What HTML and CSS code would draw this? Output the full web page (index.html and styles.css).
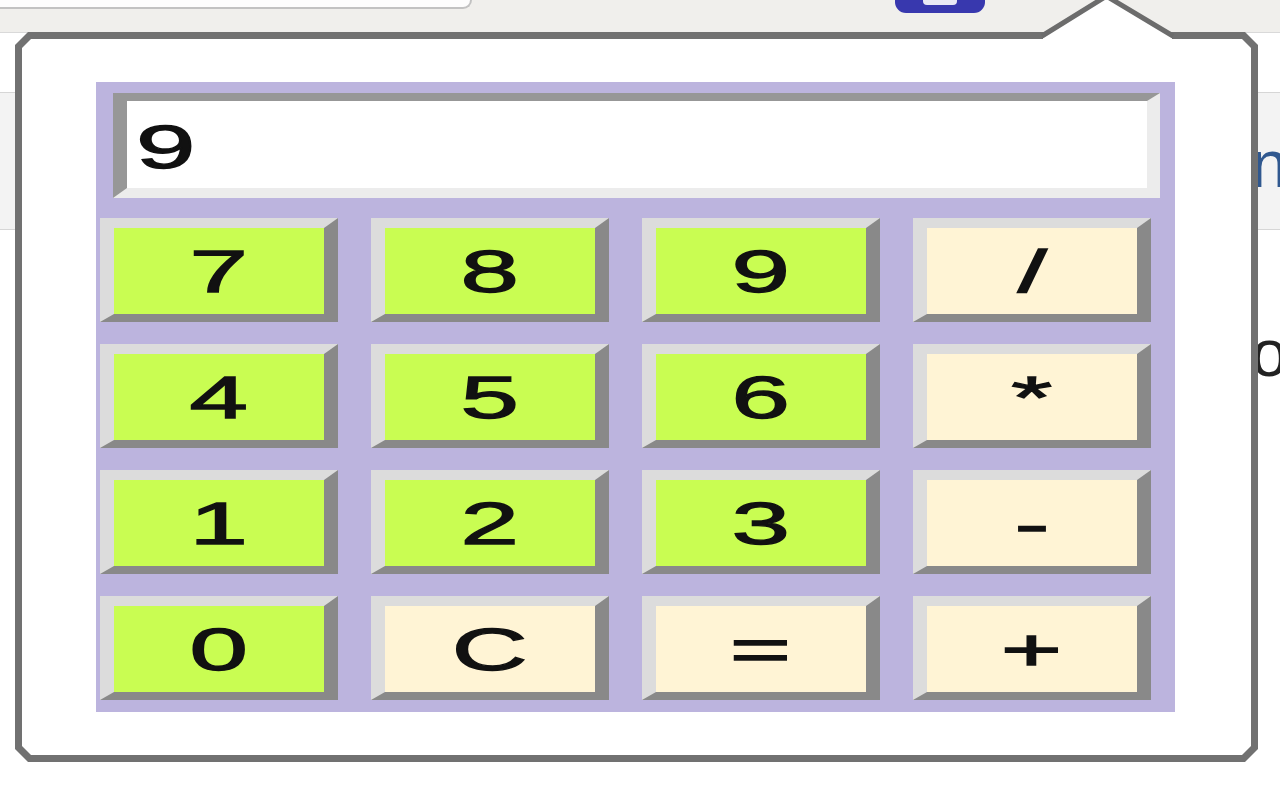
FILE: index.html
```html
<!DOCTYPE html>
<html>
<head>
<meta charset="utf-8">
<title>Calculator</title>
<link rel="stylesheet" href="styles.css">
</head>
<body>
<div class="chrome">
  <div class="omnibox"></div>
  <div class="badge"><span class="badge-text"></span></div>
</div>
<div class="page">
  <div class="band"><span class="frag frag-link">n</span></div>
  <div class="line2"><span class="frag">o</span></div>
</div>
<div class="popup">
  <div class="popup-inner">
    <div class="calc">
      <div class="display"><span class="glyph">9</span></div>
      <div class="keys">
        <button class="key num"><span class="glyph">7</span></button>
        <button class="key num"><span class="glyph">8</span></button>
        <button class="key num"><span class="glyph">9</span></button>
        <button class="key op"><span class="glyph">/</span></button>
        <button class="key num"><span class="glyph">4</span></button>
        <button class="key num"><span class="glyph">5</span></button>
        <button class="key num"><span class="glyph">6</span></button>
        <button class="key op"><span class="glyph">*</span></button>
        <button class="key num"><span class="glyph">1</span></button>
        <button class="key num"><span class="glyph">2</span></button>
        <button class="key num"><span class="glyph">3</span></button>
        <button class="key op"><span class="glyph">-</span></button>
        <button class="key num"><span class="glyph">0</span></button>
        <button class="key op"><span class="glyph">C</span></button>
        <button class="key op"><span class="glyph">=</span></button>
        <button class="key op"><span class="glyph">+</span></button>
      </div>
    </div>
  </div>
</div>
<svg class="notch" width="160" height="45" viewBox="0 0 160 45">
  <path d="M13 35 L76.4 -3.9 L142 35 L142 41 L13 41 Z" fill="#ffffff"/>
  <path d="M12 36 L76.4 -3.9 L143 36" fill="none" stroke="#6c6c6c" stroke-width="5"/>
</svg>
</body>
</html>
```

FILE: styles.css
```css
* {
  box-sizing: border-box;
}

html, body {
  margin: 0;
  padding: 0;
  width: 1280px;
  height: 800px;
  overflow: hidden;
  background: #ffffff;
  font-family: "Liberation Sans", Arial, sans-serif;
}

.chrome {
  height: 33px;
  background: #f0efec;
  border-bottom: 1px solid #d9d9d9;
  display: flex;
  align-items: flex-start;
}

.omnibox {
  width: 472px;
  height: 9px;
  background: #fdfdfd;
  border-bottom: 2px solid #c2c2c2;
  border-right: 2px solid #c2c2c2;
  border-bottom-right-radius: 10px;
}

.badge {
  margin-left: 423px;
  width: 90px;
  height: 13px;
  background: #3838ae;
  border-radius: 0 0 11px 11px;
  display: flex;
  justify-content: center;
}

.badge-text {
  width: 34px;
  height: 5px;
  background: #e9e9f5;
  border-radius: 0 0 4px 4px;
}

.page {
  width: 1280px;
  overflow: hidden;
}

.band {
  margin-top: 59px;
  height: 138px;
  background: #f3f3f3;
  border-top: 1px solid #d6d6d6;
  border-bottom: 1px solid #d6d6d6;
  padding-top: 38px;
  padding-left: 1251px;
  white-space: nowrap;
}

.line2 {
  margin-top: 90px;
  padding-left: 1251px;
  white-space: nowrap;
}

.frag {
  font-size: 66px;
  line-height: 66px;
  color: #222222;
}

.frag-link {
  color: #30588f;
}

.popup {
  position: absolute;
  left: 15px;
  top: 32px;
  width: 1243px;
  height: 730px;
  background: #717171;
  padding: 7px;
  clip-path: polygon(13px 0, calc(100% - 13px) 0, 100% 13px, 100% calc(100% - 13px), calc(100% - 13px) 100%, 13px 100%, 0 calc(100% - 13px), 0 13px);
}

.popup-inner {
  width: 100%;
  height: 100%;
  background: #ffffff;
  padding-left: 74px;
  padding-top: 43px;
  clip-path: polygon(9px 0, calc(100% - 9px) 0, 100% 9px, 100% calc(100% - 9px), calc(100% - 9px) 100%, 9px 100%, 0 calc(100% - 9px), 0 9px);
}

.calc {
  width: 1079px;
  background: #bcb4de;
  padding: 11px 24px 12px 4px;
}

.display {
  height: 105px;
  margin: 0 -9px 20px 13px;
  background: #ffffff;
  border-style: solid;
  border-width: 8px 13px 10px 14px;
  border-color: #979797 #ececec #ececec #979797;
  display: flex;
  align-items: center;
  padding: 6px 0 0 9px;
  font-size: 61px;
  color: #111111;
}

.display .glyph {
  transform-origin: left center;
}

.keys {
  display: grid;
  grid-template-columns: repeat(4, 238px);
  grid-auto-rows: 104px;
  column-gap: 33px;
  row-gap: 22px;
}

.key {
  margin: 0;
  padding: 2px 0 0 0;
  border-style: solid;
  border-width: 10px 14px 8px 14px;
  border-color: #dcdcdc #898989 #898989 #dcdcdc;
  font-family: "Liberation Sans", Arial, sans-serif;
  font-size: 60px;
  color: #111111;
  display: flex;
  align-items: center;
  justify-content: center;
}

.num {
  background: #c9fd52;
}

.op {
  background: #fff4d5;
}

.glyph {
  display: inline-block;
  line-height: 1;
  transform: scaleX(1.75);
  -webkit-text-stroke: 1.3px #111111;
}

.notch {
  position: absolute;
  left: 1030px;
  top: 0;
  overflow: visible;
}
```
